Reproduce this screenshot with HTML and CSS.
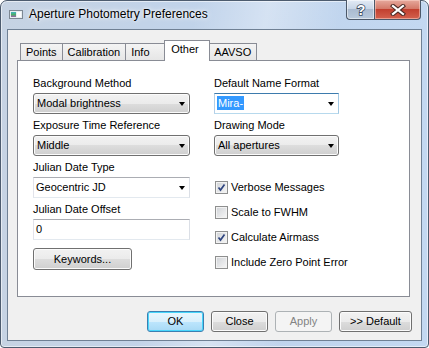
FILE: index.html
```html
<!DOCTYPE html>
<html lang="en">
<head>
  <meta charset="UTF-8" />
  <title>Aperture Photometry Preferences</title>
  <link rel="stylesheet" href="styles.css">
</head>
<body>
  <div class="window">
    <div class="titlebar">
      <svg class="app-icon" width="14" height="9" viewBox="0 0 14 9">
        <defs>
          <linearGradient id="ic" x1="0" y1="0" x2="0" y2="1">
            <stop offset="0" stop-color="#3fb3c2" />
            <stop offset="0.5" stop-color="#4caf6a" />
            <stop offset="1" stop-color="#9a5fa8" />
          </linearGradient>
        </defs>
        <rect x="0.5" y="0.5" width="13" height="8" fill="#e9eef2" stroke="#7d8893" />
        <rect x="2" y="2" width="5" height="5" fill="url(#ic)" />
        <rect x="8" y="2" width="4" height="5" fill="#fdfdfd" />
      </svg>
      <span class="title">Aperture Photometry Preferences</span>
      <div class="caption-buttons">
        <div class="cap-btn help">
          <svg width="12" height="14" viewBox="0 0 12 14">
            <text x="6" y="12" text-anchor="middle" font-family="Liberation Sans, sans-serif" font-weight="bold" font-size="14" fill="#fff" stroke="#3b4c62" stroke-width="1.6" paint-order="stroke">?</text>
          </svg>
        </div>
        <div class="cap-btn close">
          <svg width="16" height="12" viewBox="0 0 16 12">
            <path d="M3 2 L13 10 M13 2 L3 10" stroke="#4b2a25" stroke-width="4.2" stroke-linecap="square" />
            <path d="M3 2 L13 10 M13 2 L3 10" stroke="#fff" stroke-width="2.2" stroke-linecap="square" />
          </svg>
        </div>
      </div>
    </div>

    <div class="client">
      <div class="tabs">
        <div class="tab">Points</div>
        <div class="tab">Calibration</div>
        <div class="tab">Info</div>
        <div class="tab active">Other</div>
        <div class="tab">AAVSO</div>
      </div>

      <div class="tab-panel">
        <div class="column left-col">
          <div class="field">
            <label>Background Method</label>
            <div class="combo">Modal brightness</div>
          </div>
          <div class="field">
            <label>Exposure Time Reference</label>
            <div class="combo">Middle</div>
          </div>
          <div class="field">
            <label>Julian Date Type</label>
            <div class="combo editable">Geocentric JD</div>
          </div>
          <div class="field">
            <label>Julian Date Offset</label>
            <div class="textbox">0</div>
          </div>
          <button class="btn keywords">Keywords...</button>
        </div>

        <div class="column right-col">
          <div class="field">
            <label>Default Name Format</label>
            <div class="combo editable focused"><span class="selected-text">Mira-</span></div>
          </div>
          <div class="field">
            <label>Drawing Mode</label>
            <div class="combo">All apertures</div>
          </div>
          <div class="checks">
            <div class="check">
              <span class="box"><svg width="11" height="11" viewBox="0 0 11 11"><path d="M2.5 5.5 L4.5 8 L8.5 2.5" fill="none" stroke="#2f4580" stroke-width="1.7" /></svg></span>
              Verbose Messages
            </div>
            <div class="check">
              <span class="box"></span>
              Scale to FWHM
            </div>
            <div class="check">
              <span class="box"><svg width="11" height="11" viewBox="0 0 11 11"><path d="M2.5 5.5 L4.5 8 L8.5 2.5" fill="none" stroke="#2f4580" stroke-width="1.7" /></svg></span>
              Calculate Airmass
            </div>
            <div class="check">
              <span class="box"></span>
              Include Zero Point Error
            </div>
          </div>
        </div>
      </div>

      <div class="dialog-buttons">
        <button class="btn default">OK</button>
        <button class="btn">Close</button>
        <button class="btn" disabled>Apply</button>
        <button class="btn wide">&gt;&gt; Default</button>
      </div>
    </div>
  </div>
</body>
</html>
```

FILE: styles.css
```css
* { box-sizing: border-box; margin: 0; padding: 0; }
body {
  font-family: "Liberation Sans", Arial, sans-serif;
  font-size: 11px;
  color: #000;
  background: #fff;
}

.window {
  width: 429px;
  height: 348px;
  border: 1px solid #4d5c6f;
  border-radius: 7px 7px 4px 4px;
  padding: 0 6px 6px;
  background:
    linear-gradient(100deg, rgba(255,255,255,0) 40%, rgba(255,255,255,0.35) 55%, rgba(255,255,255,0) 70%),
    linear-gradient(to right, #c6d3e3, #bfd3ec 60%, #c3d8f1);
  box-shadow: inset 0 0 0 1px rgba(255, 255, 255, 0.55);
  display: flex;
  flex-direction: column;
}

.titlebar {
  height: 28px;
  display: flex;
  align-items: flex-start;
}

.app-icon {
  margin: 9px 0 0 2px;
}

.title {
  margin: 6px 0 0 6px;
  font-size: 12px;
  line-height: 15px;
  text-shadow: 0 0 6px #fff, 0 0 3px #fff;
}

.caption-buttons {
  display: flex;
  margin: -1px 1px 0 auto;
}

.cap-btn {
  height: 20px;
  border: 1px solid #4b5869;
  border-top: none;
  display: flex;
  align-items: center;
  justify-content: center;
}

.cap-btn.help {
  width: 28px;
  border-right: none;
  border-radius: 0 0 0 4px;
  background: linear-gradient(#e3ebf5, #c8d6e7 45%, #aabbd0 50%, #b8c9dc);
  box-shadow: inset 0 0 0 1px rgba(255, 255, 255, 0.5);
}

.cap-btn.close {
  width: 47px;
  border-radius: 0 0 4px 0;
  background: linear-gradient(#e6a99d, #d47a6a 45%, #c2402f 50%, #d3614e);
  box-shadow: inset 0 0 0 1px rgba(255, 220, 210, 0.5);
}

.client {
  height: 312px;
  border: 1px solid #6f8094;
  background: #f0f0f0;
  padding: 10px 9px 0 9px;
}

.tabs {
  display: flex;
  align-items: flex-start;
  height: 21px;
  padding-left: 3px;
  position: relative;
  z-index: 1;
}

.tab {
  height: 17px;
  margin: 3px 0 0 -1px;
  min-width: 41px;
  padding: 2px 5px 0 5px;
  line-height: 13px;
  white-space: nowrap;
  border: 1px solid #898c95;
  border-bottom: none;
  background: linear-gradient(#f4f4f4, #e6e6e6);
}

.tab:first-child {
  margin-left: 0;
}

.tab.active {
  height: 21px;
  min-width: 46px;
  margin: 0 -1px 0 -2px;
  padding: 2px 5px 0 6px;
  background: #fff;
  position: relative;
  z-index: 1;
}

.tab-panel {
  height: 237px;
  margin: -1px 2px 0 0;
  border: 1px solid #898c95;
  background: #fff;
  padding: 16px 0 0 15px;
  display: flex;
  gap: 24px;
}

.left-col { width: 157px; }
.right-col { width: 125px; }

.field {
  margin-bottom: 5px;
}

.field label {
  display: block;
  line-height: 13px;
  margin-bottom: 3px;
  white-space: nowrap;
}

.combo {
  position: relative;
  height: 21px;
  line-height: 19px;
  padding-left: 3px;
  border: 1px solid #707070;
  border-radius: 3px;
  background: linear-gradient(#f2f2f2, #ebebeb 50%, #dddddd 50%, #cfcfcf);
  box-shadow: inset 0 0 0 1px #fbfbfb;
}

.combo::after {
  content: "";
  position: absolute;
  right: 4px;
  top: 8px;
  border-style: solid;
  border-width: 4px 3.5px 0;
  border-color: #000 transparent transparent;
}

.combo.editable,
.textbox {
  height: 21px;
  line-height: 19px;
  padding-left: 2px;
  border: 1px solid;
  border-color: #abadb3 #dbdfe6 #e3e9ef #e2e3ea;
  border-radius: 0;
  background: #fff;
  box-shadow: none;
}

.combo.focused {
  border-color: #3d7bad #a4c9e3 #b7d9ed #b5cfe7;
}

.selected-text {
  background: #3399ff;
  color: #fff;
  padding: 1px 1px;
}

.checks {
  margin-top: 25px;
  display: flex;
  flex-direction: column;
  gap: 12px;
}

.check {
  display: flex;
  align-items: center;
  height: 13px;
  line-height: 13px;
  white-space: nowrap;
}

.box {
  flex: none;
  width: 13px;
  height: 13px;
  margin: 0 3px 0 1px;
  border: 1px solid #8e8f8f;
  background: linear-gradient(135deg, #cfd2d6, #f7f7f7);
  box-shadow: inset 0 0 0 1px #f2f2f2;
  display: flex;
}

.btn {
  height: 21px;
  width: 57px;
  font-family: inherit;
  font-size: 11px;
  line-height: 19px;
  color: #000;
  border: 1px solid #707070;
  border-radius: 3px;
  background: linear-gradient(#f2f2f2, #ebebeb 50%, #dddddd 50%, #cfcfcf);
  box-shadow: inset 0 0 0 1px #fbfbfb;
}

.btn.keywords {
  width: 99px;
  height: 22px;
  margin-top: 3px;
}

.btn.default {
  border-color: #3c7fb1;
  background: linear-gradient(#eaf6fd, #d9f0fc 50%, #bee6fd 50%, #a7d9f5);
  box-shadow: inset 0 0 0 1px #48d6fb;
}

.btn:disabled {
  color: #838383;
  border-color: #adb2b5;
  background: #f4f4f4;
  box-shadow: none;
}

.btn.wide {
  width: 73px;
}

.dialog-buttons {
  display: flex;
  justify-content: flex-end;
  gap: 7px;
  margin: 14px 0 0;
}
```
